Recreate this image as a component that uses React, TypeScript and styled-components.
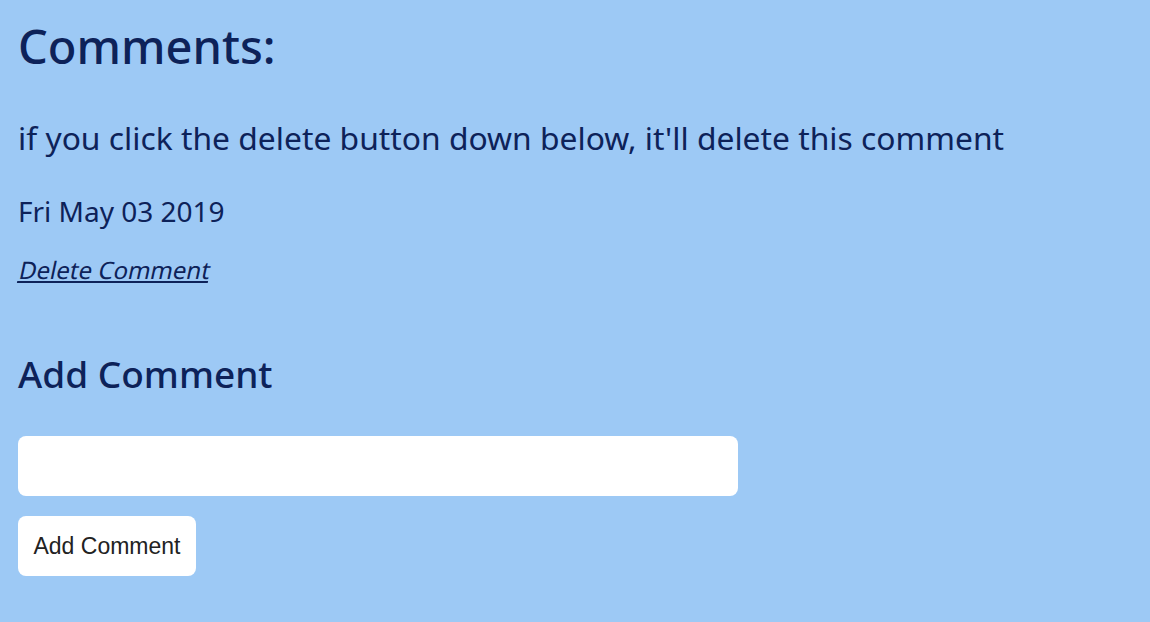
import React from "react";
import styled, { createGlobalStyle } from "styled-components";

const Global = createGlobalStyle`
  html, body { margin: 0; padding: 0; background: #9dc9f5; }
  body { font-family: "Noto Sans", "Open Sans", sans-serif; color: #0d2259; }
`;

const Page = styled.div`
  min-height: 622px;
  padding: 12px 18px 0;
  box-sizing: border-box;
  background: #9dc9f5;
`;

const Title = styled.h1`
  margin: 0;
  font-size: 47px;
  font-weight: 500;
  line-height: 68px;
`;

const CommentText = styled.p`
  margin: 36px 0 0;
  font-size: 31.8px;
  line-height: 44px;
`;

const DateText = styled.p`
  margin: 32px 0 0;
  font-size: 28px;
  line-height: 38px;
`;

const DeleteLink = styled.a`
  display: inline-block;
  margin-top: 23px;
  font-size: 24px;
  font-style: normal;
  color: #0d2259;
  text-decoration: underline;
  transform: skewX(-12deg);
  transform-origin: left 75%;
`;

const SubTitle = styled.h2`
  margin: 63px 0 0;
  font-size: 37px;
  font-weight: 500;
  line-height: 50px;
`;

const Form = styled.form`
  display: flex;
  flex-direction: column;
  align-items: flex-start;
  gap: 20px;
  margin-top: 37px;
`;

const Input = styled.input`
  width: 720px;
  height: 60px;
  box-sizing: border-box;
  border: none;
  border-radius: 8px;
  background: #fff;
  padding: 0 14px;
  font-size: 20px;
  outline: none;
`;

const Button = styled.button`
  height: 60px;
  width: 178px;
  border: none;
  border-radius: 8px;
  background: #fff;
  color: #222;
  font-family: "Liberation Sans", Arial, sans-serif;
  font-size: 23px;
  padding: 0;
`;

export default function App() {
  return (
    <>
      <Global />
      <Page>
        <Title>Comments:</Title>
        <CommentText>if you click the delete button down below, it'll delete this comment</CommentText>
        <DateText>Fri May 03 2019</DateText>
        <DeleteLink href="#">Delete Comment</DeleteLink>
        <SubTitle>Add Comment</SubTitle>
        <Form onSubmit={(e) => e.preventDefault()}>
          <Input type="text" />
          <Button type="submit">Add Comment</Button>
        </Form>
      </Page>
    </>
  );
}
